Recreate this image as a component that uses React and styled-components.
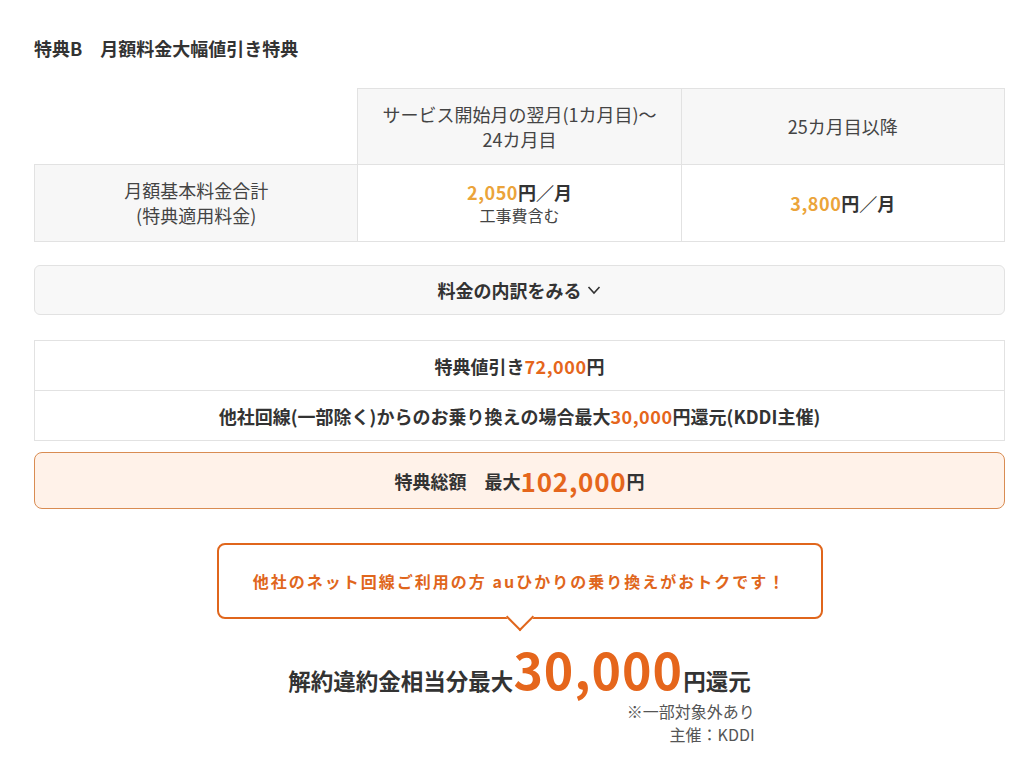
import React from "react"
import styled, { createGlobalStyle } from "styled-components"

const Global = createGlobalStyle`
    body {
        margin: 0;
        background: #fff;
        color: #333;
        font-family: "Noto Sans CJK JP", "Noto Sans", sans-serif;
    }
`

const Page = styled.div`
    padding: 36px 30px 20px 34px;
`

const Title = styled.h2`
    margin: 0 0 28px;
    font-size: 18px;
    font-weight: bold;
    line-height: 24px;
    color: #333;
`

const Table = styled.table`
    width: 100%;
    border-collapse: collapse;
    table-layout: fixed;
    font-size: 18px;
    color: #444;
`

const Cell = styled.td`
    border: 1px solid #e2e2e2;
    background: ${p => (p.$shade ? "#f7f7f7" : "#fff")};
    text-align: center;
    vertical-align: middle;
    line-height: 25px;
    height: ${p => p.$h || 75}px;
    padding: 0 8px;
`

const Blank = styled.td`
    border: none;
    border-bottom: 1px solid #e2e2e2;
`

const Price = styled.div`
    font-weight: bold;
    font-size: 18px;
    line-height: 24px;
    color: #333;
`

const Amber = styled.span`
    color: #eba43a;
    letter-spacing: 0.03em;
`

const Sub = styled.div`
    font-size: 16px;
    line-height: 22px;
`

const Toggle = styled.button`
    display: flex;
    width: 100%;
    height: 50px;
    margin-top: 23px;
    align-items: center;
    justify-content: center;
    gap: 4px;
    background: #f8f8f8;
    border: 1px solid #e2e2e2;
    border-radius: 6px;
    font-family: inherit;
    font-size: 18px;
    font-weight: bold;
    color: #333;
    cursor: pointer;
`

const List = styled.div`
    margin-top: 25px;
    border: 1px solid #e2e2e2;
`

const Row = styled.div`
    display: flex;
    align-items: center;
    justify-content: center;
    height: 49px;
    font-size: 18px;
    font-weight: bold;
    & + & {
        border-top: 1px solid #e2e2e2;
    }
`

const Orange = styled.span`
    color: #e5661c;
    font-size: ${p => p.$size || "inherit"};
    letter-spacing: 0.03em;
`

const Total = styled.div`
    display: flex;
    align-items: center;
    justify-content: center;
    height: 55px;
    margin-top: 11px;
    background: #fff2e9;
    border: 1px solid #d98c52;
    border-radius: 8px;
    font-size: 18px;
    font-weight: bold;
    white-space: pre;
`

const Promo = styled.div`
    display: flex;
    flex-direction: column;
    align-items: center;
    margin-top: 34px;
`

const Bubble = styled.div`
    position: relative;
    display: flex;
    align-items: center;
    justify-content: center;
    width: 602px;
    height: 72px;
    border: 2px solid #e0661c;
    border-radius: 8px;
    background: #fff;
    font-size: 16px;
    font-weight: bold;
    letter-spacing: 2px;
    color: #e0661c;

    &::after {
        content: "";
        position: absolute;
        left: 50%;
        bottom: -10px;
        width: 18px;
        height: 18px;
        margin-left: -10px;
        background: #fff;
        border-right: 2px solid #e0661c;
        border-bottom: 2px solid #e0661c;
        transform: rotate(45deg);
    }
`

const Refund = styled.div`
    display: inline-flex;
    flex-direction: column;
    align-items: flex-end;
    margin-top: 29px;
`

const Headline = styled.div`
    font-size: 22.5px;
    font-weight: bold;
    color: #333;
    line-height: 40px;
    white-space: nowrap;
`

const Big = styled.span`
    font-size: 50px;
    color: #e5661c;
    letter-spacing: 0.02em;
`

const Note = styled.div`
    font-size: 16px;
    line-height: 23px;
    color: #555;
    margin-right: -4px;
`

const Chevron = () => (
    <svg width="16" height="16" viewBox="0 0 16 16" fill="none">
        <path d="M2.5 5 L8 11 L13.5 5" stroke="#333" strokeWidth="1.6" />
    </svg>
)

const App = () => {
    return (
        <Page>
            <Global />
            <Title>特典B　月額料金大幅値引き特典</Title>
            <Table>
                <tbody>
                    <tr>
                        <Blank />
                        <Cell $shade $h={75}>サービス開始月の翌月(1カ月目)～<br />24カ月目</Cell>
                        <Cell $shade $h={75}>25カ月目以降</Cell>
                    </tr>
                    <tr>
                        <Cell $shade $h={76}>月額基本料金合計<br />(特典適用料金)</Cell>
                        <Cell $h={76}>
                            <Price><Amber>2,050</Amber>円／月</Price>
                            <Sub>工事費含む</Sub>
                        </Cell>
                        <Cell $h={76}>
                            <Price><Amber>3,800</Amber>円／月</Price>
                        </Cell>
                    </tr>
                </tbody>
            </Table>
            <Toggle>料金の内訳をみる<Chevron /></Toggle>
            <List>
                <Row>特典値引き<Orange>72,000</Orange>円</Row>
                <Row>他社回線(一部除く)からのお乗り換えの場合最大<Orange>30,000</Orange>円還元(KDDI主催)</Row>
            </List>
            <Total>特典総額　最大<Orange $size="26px">102,000</Orange>円</Total>
            <Promo>
                <Bubble>他社のネット回線ご利用の方 auひかりの乗り換えがおトクです！</Bubble>
                <Refund>
                    <Headline>解約違約金相当分最大<Big>30,000</Big>円還元</Headline>
                    <Note>※一部対象外あり</Note>
                    <Note>主催：KDDI</Note>
                </Refund>
            </Promo>
        </Page>
    )
}

export default App
